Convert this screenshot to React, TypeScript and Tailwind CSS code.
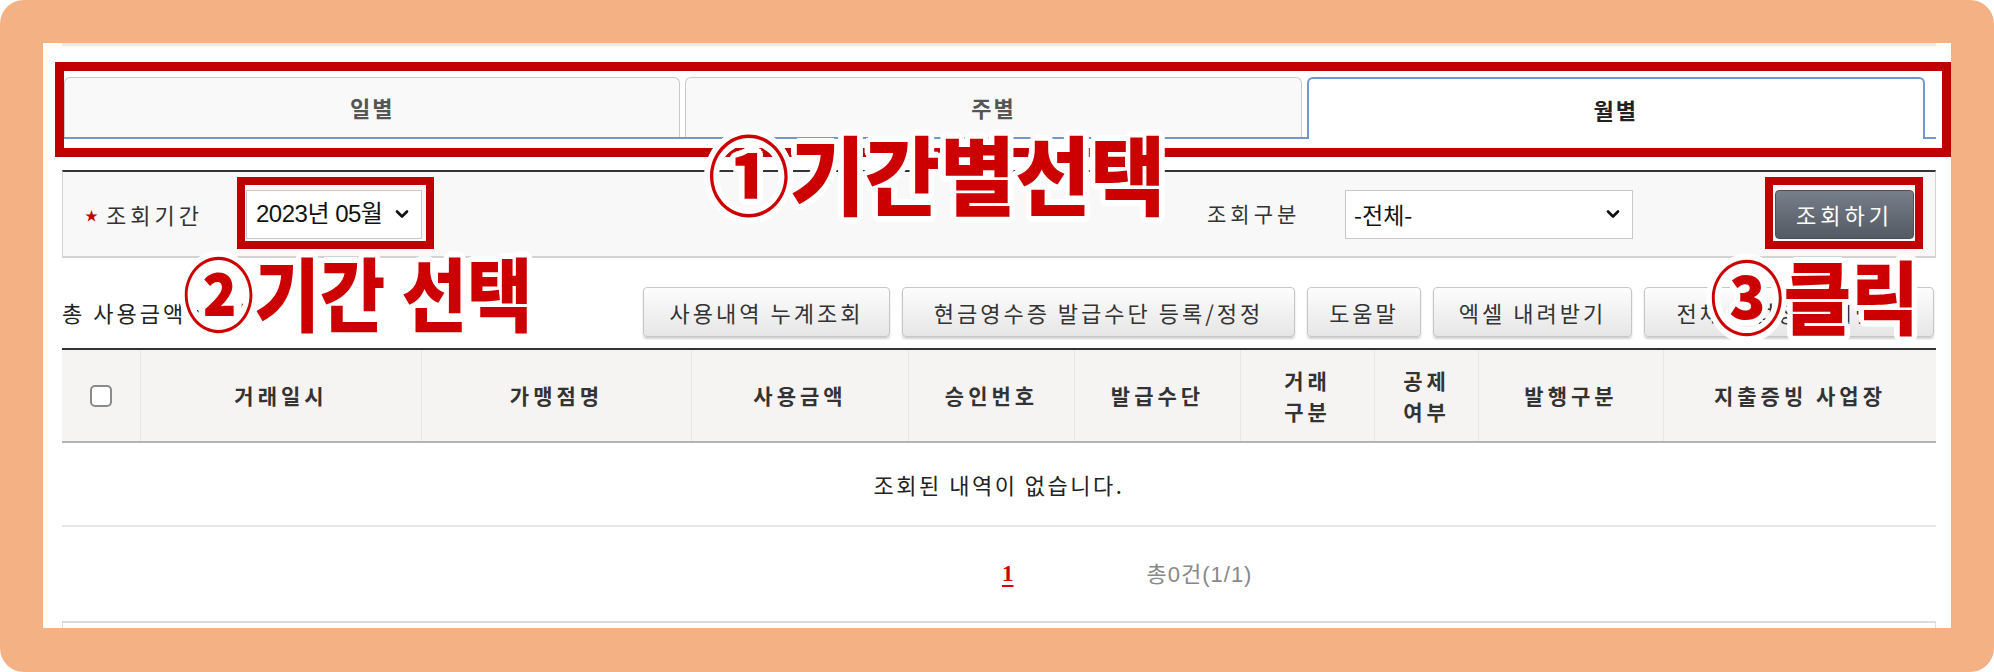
import { ChevronDown } from "lucide-react";

const halo =
  "[text-shadow:6px_0_0_#fff,-6px_0_0_#fff,0_6px_0_#fff,0_-6px_0_#fff,4.2px_4.2px_0_#fff,-4.2px_4.2px_0_#fff,4.2px_-4.2px_0_#fff,-4.2px_-4.2px_0_#fff,5.5px_2.3px_0_#fff,-5.5px_2.3px_0_#fff,5.5px_-2.3px_0_#fff,-5.5px_-2.3px_0_#fff,2.3px_5.5px_0_#fff,-2.3px_5.5px_0_#fff,2.3px_-5.5px_0_#fff,-2.3px_-5.5px_0_#fff]";

const columns = [
  { label: "거래일시" },
  { label: "가맹점명" },
  { label: "사용금액" },
  { label: "승인번호" },
  { label: "발급수단" },
  { label: "거래\n구분" },
  { label: "공제\n여부" },
  { label: "발행구분" },
  { label: "지출증빙 사업장" },
];

const buttons = [
  { label: "사용내역 누계조회", w: "w-[247px]" },
  { label: "현금영수증 발급수단 등록/정정", w: "w-[393px]" },
  { label: "도움말", w: "w-[114px]" },
  { label: "엑셀 내려받기", w: "w-[199px]" },
  { label: "전체 사업장 내려받기", w: "w-[290px]" },
];

const Tab = ({ label, active }: { label: string; active?: boolean }) => (
  <div
    className={
      active
        ? "flex-1 h-[62px] -mb-[2px] flex items-center justify-center rounded-t-[6px] border-2 border-b-0 border-[#7197cd] bg-white text-[22px] font-bold tracking-[2px] text-[#222]"
        : "flex-1 h-[60px] flex items-center justify-center rounded-t-[6px] border border-b-0 border-[#c9c9c9] bg-[#f9f9f9] text-[22px] font-bold tracking-[2px] text-[#555]"
    }
  >
    {label}
  </div>
);

export default function App() {
  return (
    <div className="w-[1994px] h-[672px] bg-white font-['Noto_Sans_CJK_KR',sans-serif]">
      <div className="h-full rounded-[24px] bg-[#F4B183] px-[43px] pt-[43px]">
        <div className="relative h-[585px] overflow-hidden bg-white pl-[19px] pr-[15px]">
          {/* top strip */}
          <div className="h-[3px] bg-[#e8ebf0]" />

          {/* period tabs */}
          <div className="mt-[31px] flex items-end gap-[5px] border-b-2 border-[#7197cd] pl-[2px] pr-[11px]">
            <Tab label="일별" />
            <Tab label="주별" />
            <Tab label="월별" active />
          </div>

          {/* search box */}
          <div className="mt-[31px] h-[88px] flex items-center border-t-2 border-t-[#333] border-x border-b-2 border-x-[#d3d3d3] border-b-[#d3d3d3] bg-[#f8f8f8] pl-[22px]">
            <span className="w-[13px] text-[13px] text-[#c00000] leading-none">★</span>
            <span className="ml-[8px] w-[97px] whitespace-nowrap text-[22px] tracking-[4px] text-[#333]">조회기간</span>
            <div className="ml-[43px] w-[176px] h-[49px] flex items-center justify-between border border-[#c8c8c8] bg-white pl-[9px] pr-[9px]">
              <span className="font-['Liberation_Sans','Noto_Sans_CJK_KR',sans-serif] text-[24px] text-[#111] tracking-[-0.5px]">2023년 05월</span>
              <ChevronDown className="w-[20px] h-[20px] text-[#111]" strokeWidth={3.2} />
            </div>
            <span className="ml-[785px] w-[97px] whitespace-nowrap text-[21px] tracking-[4px] text-[#333]">조회구분</span>
            <div className="ml-[41px] w-[288px] h-[49px] flex items-center justify-between border border-[#c8c8c8] bg-white pl-[8px] pr-[9px]">
              <span className="text-[23px] text-[#111]">-전체-</span>
              <ChevronDown className="w-[20px] h-[20px] text-[#111]" strokeWidth={3.2} />
            </div>
            <button className="ml-[142px] w-[139px] h-[49px] rounded-[4px] border border-[#4b5058] bg-linear-to-b from-[#777f8a] to-[#535a64] text-[22px] tracking-[4px] text-white">
              조회하기
            </button>
          </div>

          {/* action row */}
          <div className="mt-[29px] h-[50px] flex items-center justify-between pr-[2px]">
            <div className="text-[22px] tracking-[3px] text-[#222]">
              총 사용금액 : <span className="text-[#1f5bb5]">0</span>원
            </div>
            <div className="flex gap-[12px]">
              {buttons.map((b) => (
                <button
                  key={b.label}
                  className={`${b.w} h-[50px] rounded-[4px] border border-[#c6c6c6] bg-linear-to-b from-[#fdfdfd] to-[#e6e6e6] shadow-[0_2px_2px_rgba(0,0,0,0.18)] whitespace-nowrap text-[22px] tracking-[3px] text-[#333]`}
                >
                  {b.label}
                </button>
              ))}
            </div>
          </div>

          {/* table */}
          <div className="mt-[11px] border-t-2 border-[#333]">
            <div className="h-[93px] grid grid-cols-[79px_281px_270px_217px_166px_166px_134px_104px_185px_272px] border-b-2 border-[#b4b4b4] bg-[#f5f4f2]">
              <div className="flex items-center justify-center border-r border-[#e6e6e6]">
                <span className="w-[22px] h-[22px] rounded-[5px] border-2 border-[#8a8a8a] bg-white" />
              </div>
              {columns.map((c, i) => (
                <div
                  key={c.label}
                  className={
                    i === columns.length - 1
                      ? "flex items-center justify-center text-center whitespace-pre-line text-[21px] leading-[31px] font-bold tracking-[4px] text-[#333]"
                      : "flex items-center justify-center text-center whitespace-pre-line border-r border-[#e6e6e6] text-[21px] leading-[31px] font-bold tracking-[4px] text-[#333]"
                  }
                >
                  {c.label}
                </div>
              ))}
            </div>
            <div className="h-[84px] flex items-center justify-center border-b-2 border-[#e6e6e6] text-[22px] tracking-[2.5px] text-[#222]">
              조회된 내역이 없습니다.
            </div>
            <div className="h-[94px] flex items-center pl-[940px] font-['Liberation_Sans','Noto_Sans_CJK_KR',sans-serif]">
              <span className="font-['Liberation_Serif',serif] text-[23px] font-bold text-[#d00000] underline underline-offset-[4px]">1</span>
              <span className="ml-[133px] text-[22px] tracking-[1px] text-[#888]">총0건(1/1)</span>
            </div>
            <div className="h-[8px] border-t-2 border-x border-[#dcdcdc]" />
          </div>

          {/* annotation boxes */}
          <div className="absolute left-[12px] top-[19px] w-[1896px] h-[95px] border-[9px] border-[#c00000]" />
          <div className="absolute left-[194px] top-[134px] w-[197px] h-[72px] border-[8px] border-[#c00000]" />
          <div className="absolute left-[1722px] top-[134px] w-[158px] h-[72px] border-[8px] border-[#c00000]" />

          {/* annotation labels */}
          <div className={`absolute left-[665px] top-[86px] origin-left scale-x-[0.95] whitespace-nowrap text-[86px] leading-none font-black text-[#cc0000] ${halo}`}>
            ①기간별선택
          </div>
          <div className={`absolute left-[140px] top-[207px] origin-left scale-x-[0.89] whitespace-nowrap text-[80px] leading-none font-black text-[#cc0000] ${halo}`}>
            ②기간 선택
          </div>
          <div className={`absolute left-[1667px] top-[210px] origin-left scale-x-[0.92] whitespace-nowrap text-[80px] leading-none font-black text-[#cc0000] ${halo}`}>
            ③클릭
          </div>
        </div>
      </div>
    </div>
  );
}
